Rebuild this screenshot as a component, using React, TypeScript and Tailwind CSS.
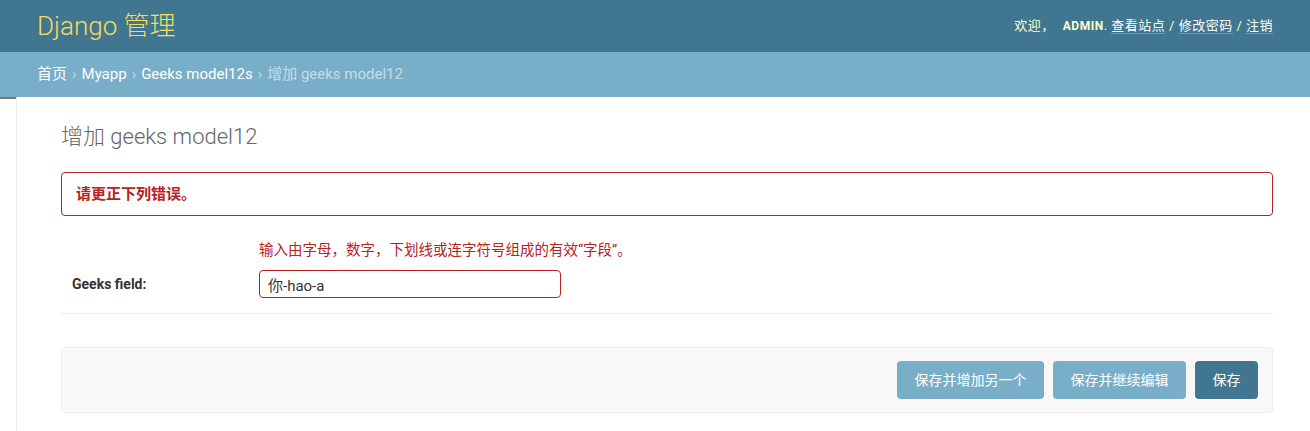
import React from 'react';

const font = { fontFamily: 'Roboto, "Noto Sans CJK SC", sans-serif' };

// --- Header ---
const Header: React.FC = () => (
  <div className="flex h-[52px] shrink-0 items-center justify-between bg-[#417690] pl-[37px] pr-[37px]">
    <h1 className="text-[26px] font-light leading-none text-[#f5dd5d]">Django 管理</h1>
    <div className="text-[13px] tracking-[0.5px] text-[#ffffcc]">
      欢迎，
      <strong className="ml-2 text-[12px] font-bold tracking-[0.5px]">ADMIN</strong>.{' '}
      <a className="border-b border-white/25 text-white">查看站点</a> /{' '}
      <a className="border-b border-white/25 text-white">修改密码</a> /{' '}
      <a className="border-b border-white/25 text-white">注销</a>
    </div>
  </div>
);

// --- Breadcrumbs ---
const Breadcrumbs: React.FC = () => (
  <div className="flex h-[45px] shrink-0 items-center bg-[#79aec8] pl-[37px] text-[15px] text-[#c4dce8]">
    <a className="text-white">首页</a>
    <span className="mx-[5px]">›</span>
    <a className="text-white">Myapp</a>
    <span className="mx-[5px]">›</span>
    <a className="text-white">Geeks model12s</a>
    <span className="mx-[5px]">›</span>
    <span>增加 geeks model12</span>
  </div>
);

const App: React.FC = () => {
  return (
    <div className="flex h-[431px] flex-col overflow-hidden bg-white text-[#333]" style={font}>
      <Header />
      <Breadcrumbs />
      <div className="flex flex-1">
        {/* nav sidebar toggle */}
        <div className="w-[17px] shrink-0 border-r border-[#eaeaea]">
          <div className="h-[2px] w-[16px] bg-[#777]" />
        </div>
        <div className="flex-1 pl-[44px] pr-[37px] pt-[25px]">
          <h1 className="text-[22px] font-light leading-[30px] text-[#666]">增加 geeks model12</h1>

          <p className="mt-[20px] rounded-[4px] border border-[#ba2121] px-[14px] py-[10px] text-[15px] font-bold leading-[22px] text-[#ba2121]">
            请更正下列错误。
          </p>

          {/* form row */}
          <div className="mt-[25px] border-b border-[#eeeeee] pb-[15px] pl-[11px]">
            <div className="flex">
              <div className="w-[187px]" />
              <p className="text-[14.5px] leading-[20px] text-[#ba2121]">
                输入由字母，数字，下划线或连字符号组成的有效“字段”。
              </p>
            </div>
            <div className="mt-[9px] flex items-center">
              <label className="w-[187px] text-[14px] font-bold text-[#333]">Geeks field:</label>
              <input
                className="h-[28px] w-[302px] rounded-[4px] border border-[#ba2121] px-[8px] text-[15px] text-[#333] outline-none"
                defaultValue="你-hao-a"
                style={font}
              />
            </div>
          </div>

          {/* submit row */}
          <div className="mt-[33px] flex justify-end gap-[9px] rounded-[4px] border border-[#eeeeee] bg-[#f8f8f8] py-[13px] pr-[14px]">
            <button className="h-[38px] rounded-[4px] bg-[#79aec8] px-[17.5px] text-[14px] text-white">保存并增加另一个</button>
            <button className="h-[38px] rounded-[4px] bg-[#79aec8] px-[17.5px] text-[14px] text-white">保存并继续编辑</button>
            <button className="h-[38px] rounded-[4px] bg-[#417690] px-[17.5px] text-[14px] text-white">保存</button>
          </div>
        </div>
      </div>
    </div>
  );
};

export default App;
